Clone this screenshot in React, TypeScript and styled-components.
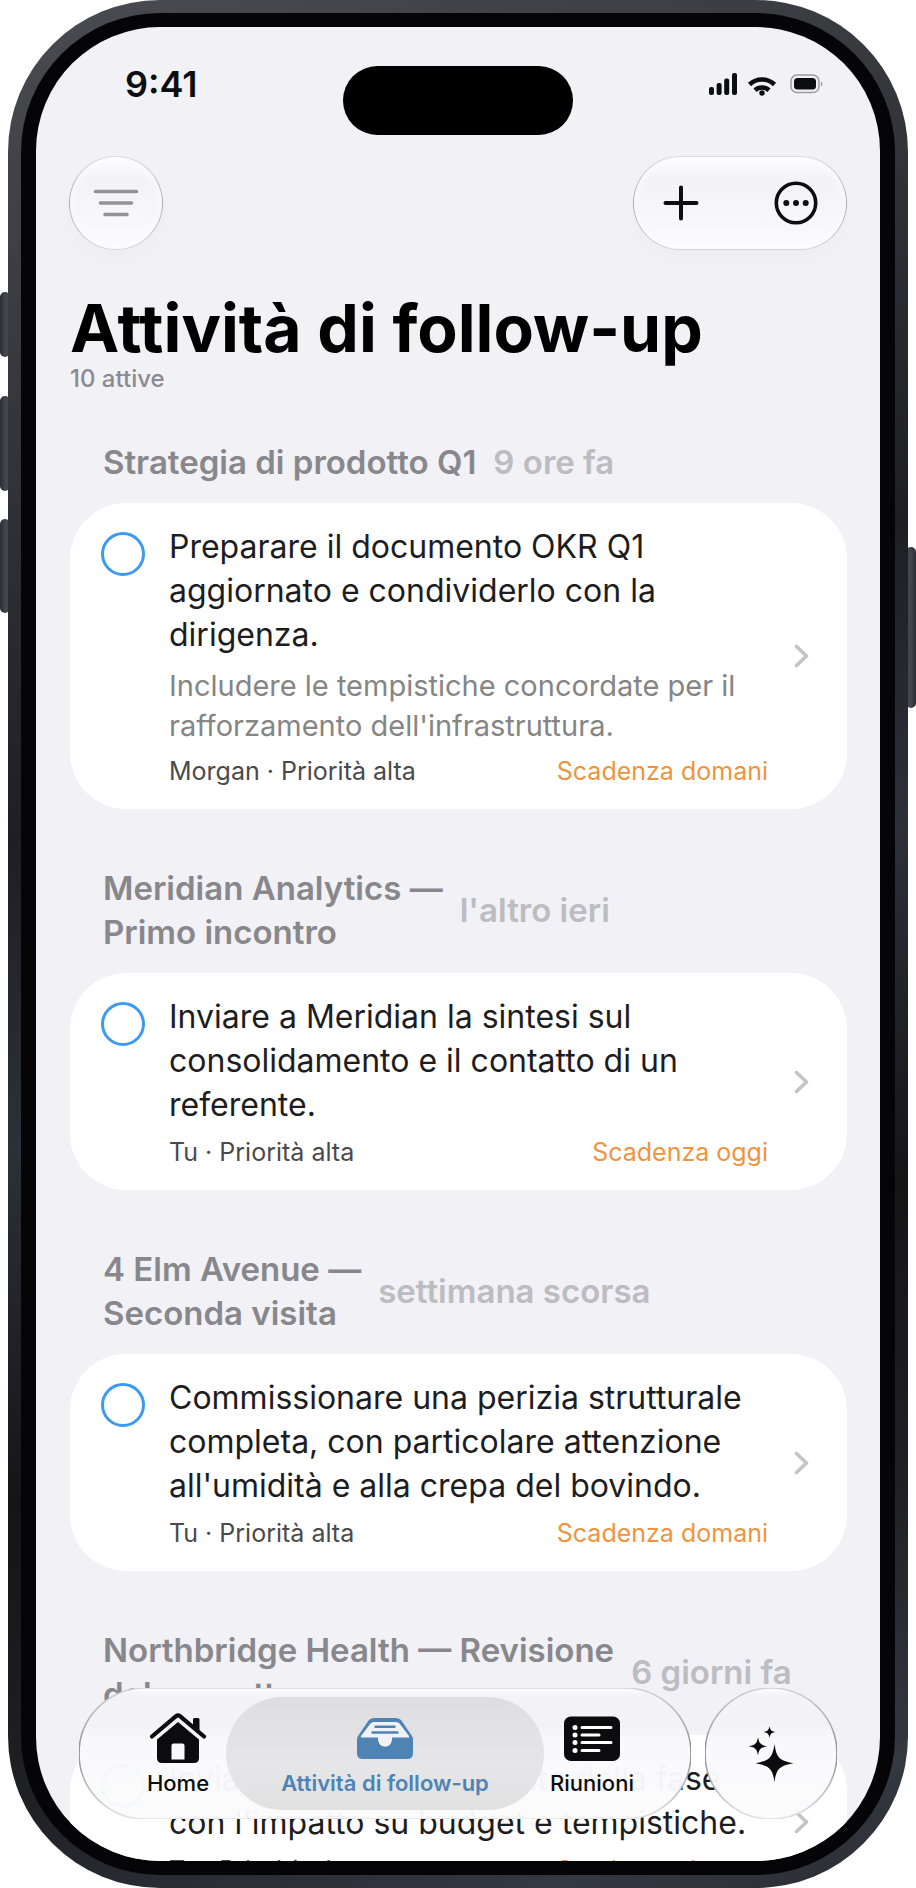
import React from 'react';
import styled, { createGlobalStyle } from 'styled-components';

const GlobalStyle = createGlobalStyle`
  *, *::before, *::after { box-sizing: border-box; }
  body { margin: 0; background: #fff; font-family: Inter, "Liberation Sans", sans-serif; }
  button, input { font: inherit; }
`;

const Device = styled.div`
  position: relative;
  height: 100vh;
  min-height: 900px;
  padding: 0 8px;
`;

const SideKey = styled.span<{ $top: number; $length: number; $side: 'left' | 'right' }>`
  position: absolute;
  top: ${(p) => p.$top}px;
  ${(p) => p.$side}: 0;
  width: 10px;
  height: ${(p) => p.$length}px;
  border-radius: 5px;
  background: linear-gradient(to ${(p) => p.$side}, #3c3e43, #46484e 40%, #2b2d32);
`;

const Frame = styled.div`
  position: relative;
  height: 100%;
  padding: 13px;
  border-radius: 152px;
  background: linear-gradient(160deg, #4a4c51 0%, #3a3c42 14%, #2d3035 24%, #1d1f23 38%, #2c3038 52%, #141517 68%, #1f2125 82%, #343841 94%, #2a2c30 100%);
`;

const Bezel = styled.div`
  height: 100%;
  padding: 14px 15px;
  border-radius: 139px;
  background: #050507;
`;

const Screen = styled.div`
  position: relative;
  display: flex;
  flex-direction: column;
  height: 100%;
  overflow: hidden;
  border-radius: 124px;
  background: #f1f1f6;
`;

const StatusBar = styled.div`
  display: grid;
  grid-template-columns: 1fr 230px 1fr;
  flex: none;
  height: 108px;
  padding: 39px 57px 0;
`;

const Clock = styled.time`
  padding-left: 32px;
  font-size: 36px;
  line-height: 36px;
  font-weight: 600;
  color: #0c0d10;
`;

const Island = styled.div`
  height: 69px;
  border-radius: 35px;
  background: #000;
`;

const StatusIcons = styled.div`
  display: flex;
  justify-content: flex-end;
  align-items: center;
  height: 36px;
`;

const Toolbar = styled.div`
  display: flex;
  justify-content: space-between;
  flex: none;
  padding: 21px 33px 0;
`;

const glass = `
  border: 1px solid transparent;
  background:
    linear-gradient(to bottom, #fcfcff 0%, #f3f3f7 24%, #f5f5fa 55%, #fbfbfe 100%) padding-box,
    linear-gradient(to bottom, #dcdce0, #ababaf 50%, #d6d6da) border-box;
  box-shadow: 0 10px 24px rgba(0, 0, 0, 0.02), inset 0 0 14px rgba(255, 255, 255, 0.8);
`;

const RoundButton = styled.button`
  display: grid;
  place-items: center;
  width: 94px;
  height: 94px;
  padding: 0;
  border-radius: 50%;
  ${glass}
`;

const ButtonGroup = styled.div`
  display: flex;
  justify-content: space-between;
  width: 214px;
  height: 94px;
  padding: 0 3px 0 0;
  border-radius: 47px;
  ${glass}
`;

const GroupButton = styled.button`
  display: grid;
  place-items: center;
  width: 94px;
  height: 92px;
  padding: 0;
  border: 0;
  background: none;
`;

const Header = styled.header`
  flex: none;
  padding: 42px 33px 0 34px;
`;

const Title = styled.h1`
  margin: 0;
  font-size: 66px;
  line-height: 72px;
  font-weight: 700;
  color: #000;
`;

const Subtitle = styled.p`
  margin: 0;
  font-size: 24px;
  line-height: 30px;
  font-weight: 500;
  color: #8a8a8f;
`;

const List = styled.main`
  flex: 1;
  min-height: 0;
  overflow: hidden;
  padding: 46px 33px 0 34px;
`;

const Section = styled.section`
  margin-bottom: 57px;
`;

const SectionHeader = styled.div`
  display: flex;
  align-items: center;
  gap: 17px;
  margin-bottom: 19px;
  padding: 0 33px;
  font-size: 33px;
  line-height: 44px;
  font-weight: 600;
`;

const SectionTitle = styled.h2`
  margin: 0;
  font: inherit;
  white-space: pre;
  color: #87878c;
`;

const SectionAge = styled.span`
  white-space: nowrap;
  color: #bcbcc1;
`;

const Card = styled.article`
  display: flex;
  align-items: center;
  padding: 22px 38px 22px 31px;
  border-radius: 56px;
  background: #fff;
`;

const Check = styled.input`
  appearance: none;
  flex: none;
  align-self: flex-start;
  width: 44px;
  height: 44px;
  margin: 7px 24px 0 0;
  border: 3px solid #3c9bf0;
  border-radius: 50%;
`;

const CardBody = styled.div`
  flex: 1;
  min-width: 0;
`;

const TaskTitle = styled.label`
  display: block;
  font-size: 32px;
  line-height: 44px;
  white-space: pre-line;
  color: #1d1d1f;
`;

const TaskNote = styled.p`
  margin: 9px 0 0;
  font-size: 29px;
  line-height: 40px;
  white-space: pre-line;
  color: #858585;
`;

const TaskMeta = styled.div`
  display: flex;
  justify-content: space-between;
  margin-top: 9px;
  font-size: 25px;
  line-height: 32px;
  color: #4a4a4a;
`;

const Due = styled.span`
  color: #ee9440;
`;

const Chevron = styled.svg`
  flex: none;
  margin-left: 26px;
`;

const Dock = styled.div`
  position: absolute;
  right: 43px;
  bottom: 42px;
  left: 43px;
  display: flex;
  gap: 14px;
  height: 131px;
`;

const dockGlass = `
  border: 0;
  background:
    linear-gradient(to bottom, #fff 0%, #f4f4f8 5%, #f3f3f7 28%, rgba(249, 249, 251, 0.98) 40%, rgba(251, 251, 252, 0.96) 100%);
`;

const Rim = styled.svg`
  position: absolute;
  inset: 0;
  width: 100%;
  height: 100%;
  pointer-events: none;
`;

const TabBar = styled.nav`
  position: relative;
  display: flex;
  flex: 1;
  padding: 9px;
  border-radius: 66px;
  ${dockGlass}
`;

const Tab = styled.button<{ $active?: boolean; $outer?: 'left' | 'right' }>`
  display: flex;
  flex-direction: column;
  align-items: center;
  gap: 5px;
  flex: ${(p) => (p.$active ? '0 0 318px' : '1 1 0')};
  padding: 15px 0 0;
  ${(p) => p.$outer && `padding-${p.$outer}: 42px;`}
  border: 0;
  border-radius: 57px;
  background: ${(p) => (p.$active ? 'linear-gradient(to bottom, #dedee2, #e6e6e8 60%, #e1e1e2)' : 'none')};
  font-size: 22px;
  line-height: 28px;
  font-weight: ${(p) => (p.$active ? 600 : 500)};
  color: ${(p) => (p.$active ? '#4f83b4' : '#0c0c0e')};
`;

const AssistantButton = styled.button`
  position: relative;
  display: grid;
  place-items: center;
  width: 132px;
  padding: 0;
  border-radius: 50%;
  ${dockGlass}
`;

const FilterIcon = () => (
  <svg width="46" height="28" viewBox="0 0 46 28" stroke="#929297" strokeWidth="3.6" strokeLinecap="round">
    <path d="M2.5 2.5h41M7.5 14h31M12 25.5h22" />
  </svg>
);

const PlusIcon = () => (
  <svg width="36" height="36" viewBox="0 0 36 36" stroke="#0e0e10" strokeWidth="4" strokeLinecap="round">
    <path d="M18 2.5v31M2.5 18h31" />
  </svg>
);

const MoreIcon = () => (
  <svg width="44" height="44" viewBox="0 0 44 44" fill="#0e0e10">
    <circle cx="22" cy="22" r="19.7" fill="none" stroke="#0e0e10" strokeWidth="3.6" />
    <circle cx="12.3" cy="22" r="3" />
    <circle cx="22" cy="22" r="3" />
    <circle cx="31.7" cy="22" r="3" />
  </svg>
);

const StatusGlyphs = () => (
  <svg width="114" height="24" viewBox="0 0 114 24" fill="#0c0d10">
    <rect x="0" y="15" width="5" height="8" rx="2" />
    <rect x="7.6" y="11" width="5" height="12" rx="2" />
    <rect x="15.2" y="6.5" width="5" height="16.5" rx="2" />
    <rect x="23" y="1" width="5" height="22" rx="2" />
    <g fill="none" stroke="#0c0d10" strokeWidth="4.6">
      <path d="M40.5 12.5a18 18 0 0 1 25 0" />
      <path d="M46 18.2a10.5 10.5 0 0 1 14 0" />
    </g>
    <circle cx="53" cy="21" r="2.7" />
    <rect x="82" y="3" width="28" height="17.5" rx="6" fill="none" stroke="#9c9ca1" strokeWidth="1.5" />
    <rect x="85" y="6" width="22" height="11.5" rx="3.5" />
    <path d="M112 9.5c1.8.6 1.8 4.4 0 5z" fill="#9c9ca1" />
  </svg>
);

const HomeIcon = () => (
  <svg width="58" height="52" viewBox="0 0 58 52" fill="#0c0c0e">
    <path d="M44 7.5q0-1.5 1.5-1.5h3.5q1.5 0 1.5 1.5v11l-6.5-5.5z" />
    <path d="M3 24.5 27 4.2q2-1.6 4 0L55 24.5" fill="none" stroke="#0c0c0e" strokeWidth="4.2" strokeLinecap="round" />
    <path fillRule="evenodd" d="M29 10 50 27.5V46q0 5-5 5H13q-5 0-5-5V27.5zM24.5 31.5q-2 0-2 2v14h13v-14q0-2-2-2z" />
  </svg>
);

const TrayIcon = () => (
  <svg width="58" height="52" viewBox="0 0 58 52">
    <path d="M3 26 13.5 10.5Q15.5 8 18.5 8h21q3 0 5 2.5L55 26" fill="none" stroke="#4f83b4" strokeWidth="4" strokeLinejoin="round" />
    <path d="M5 24 14.5 11.5Q16 10 18.5 10h21q2.5 0 4 1.5L53 24v2H5z" fill="#f1f2f5" />
    <path d="M1 25.5h21q0 9 7 9t7-9h21V41q0 6-6 6H7q-6 0-6-6z" fill="#4f83b4" />
    <path d="M22 25.5q0 9 7 9t7-9z" fill="#f1f2f5" />
    <path d="M19.5 14.7h19M16.5 20.5h25" stroke="#4f83b4" strokeWidth="2.4" strokeLinecap="round" />
  </svg>
);

const ListIcon = () => (
  <svg width="58" height="52" viewBox="0 0 58 52">
    <rect x="1" y="4.5" width="56" height="44.5" rx="7" fill="#0c0c0e" />
    <g stroke="#fff" strokeWidth="3" strokeLinecap="round">
      <path d="M19 15.5h29M19 23h17M19 30.5h29M19 38.5h17" />
    </g>
    <g fill="#fff">
      <circle cx="12" cy="15.5" r="2.5" />
      <circle cx="12" cy="23" r="2.5" />
      <circle cx="12" cy="30.5" r="2.5" />
      <circle cx="12" cy="38.5" r="2.5" />
    </g>
  </svg>
);

const SparkleIcon = () => (
  <svg width="46" height="56" viewBox="0 0 46 56" fill="#0c0c0e">
    <path d="M26.5 18c2 13.5 4.5 16.5 19 19.2-14.5 2.7-17 5.5-19 18.8-2-13.3-4.5-16.1-19-18.8 14.5-2.7 17-5.7 19-19.2z" />
    <path d="M10 11c1.100 6.500 2.500 8 9.500 9.300C12.500 21.600 11.100 23 10 29.500 8.900 23 7.500 21.600.5 20.300 7.500 19 8.900 17.500 10 11z" />
    <path d="M21.5 0c.8 4.3 1.7 5.3 6.2 6-4.5.8-5.4 1.7-6.2 6-.8-4.3-1.7-5.2-6.2-6 4.5-.7 5.4-1.7 6.2-6z" />
  </svg>
);

const GlassRim = ({ id }: { id: string }) => (
  <Rim aria-hidden="true">
    <defs>
      <linearGradient id={id} x1="0" y1="0" x2="0" y2="1">
        <stop offset="0" stopColor="#d2d2d6" />
        <stop offset="0.5" stopColor="#8f8f92" />
        <stop offset="1" stopColor="#e2e2e4" />
      </linearGradient>
    </defs>
    <rect x="0" y="0" width="100%" height="100%" rx="66" fill="none" stroke={`url(#${id})`} strokeWidth="1.6" />
  </Rim>
);

interface Task {
  id: string;
  meeting: string;
  age: string;
  title: string;
  note?: string;
  owner: string;
  due: string;
}

const tasks: Task[] = [
  {
    id: 'okr',
    meeting: 'Strategia di prodotto Q1',
    age: '9 ore fa',
    title: 'Preparare il documento OKR Q1\naggiornato e condividerlo con la\ndirigenza.',
    note: "Includere le tempistiche concordate per il\nrafforzamento dell'infrastruttura.",
    owner: 'Morgan',
    due: 'Scadenza domani',
  },
  {
    id: 'meridian',
    meeting: 'Meridian Analytics —\nPrimo incontro',
    age: "l'altro ieri",
    title: 'Inviare a Meridian la sintesi sul\nconsolidamento e il contatto di un\nreferente.',
    owner: 'Tu',
    due: 'Scadenza oggi',
  },
  {
    id: 'elm',
    meeting: '4 Elm Avenue —\nSeconda visita',
    age: 'settimana scorsa',
    title: "Commissionare una perizia strutturale\ncompleta, con particolare attenzione\nall'umidità e alla crepa del bovindo.",
    owner: 'Tu',
    due: 'Scadenza domani',
  },
  {
    id: 'northbridge',
    meeting: 'Northbridge Health — Revisione\ndel progetto',
    age: '6 giorni fa',
    title: "Inviare la stima aggiornata della fase\ncon l'impatto su budget e tempistiche.",
    owner: 'Tu',
    due: 'Scadenza domani',
  },
];

const TaskSection = ({ task }: { task: Task }) => (
  <Section>
    <SectionHeader>
      <SectionTitle>{task.meeting}</SectionTitle>
      <SectionAge>{task.age}</SectionAge>
    </SectionHeader>
    <Card>
      <Check type="checkbox" id={task.id} />
      <CardBody>
        <TaskTitle htmlFor={task.id}>{task.title}</TaskTitle>
        {task.note && <TaskNote>{task.note}</TaskNote>}
        <TaskMeta>
          <span>{task.owner} · Priorità alta</span>
          <Due>{task.due}</Due>
        </TaskMeta>
      </CardBody>
      <Chevron width="15" height="24" viewBox="0 0 15 24" fill="none" stroke="#c4c4c6" strokeWidth="3.6" strokeLinecap="round" strokeLinejoin="round">
        <path d="M2.5 2.5 12.5 12l-10 9.5" />
      </Chevron>
    </Card>
  </Section>
);

export default function App() {
  return (
    <>
      <GlobalStyle />
      <Device>
        <SideKey $side="left" $top={292} $length={65} />
        <SideKey $side="left" $top={396} $length={95} />
        <SideKey $side="left" $top={519} $length={94} />
        <SideKey $side="right" $top={547} $length={161} />
        <Frame>
          <Bezel>
            <Screen>
              <StatusBar>
                <Clock>9:41</Clock>
                <Island />
                <StatusIcons>
                  <StatusGlyphs />
                </StatusIcons>
              </StatusBar>
              <Toolbar>
                <RoundButton aria-label="Filtra">
                  <FilterIcon />
                </RoundButton>
                <ButtonGroup>
                  <GroupButton aria-label="Aggiungi">
                    <PlusIcon />
                  </GroupButton>
                  <GroupButton aria-label="Altro">
                    <MoreIcon />
                  </GroupButton>
                </ButtonGroup>
              </Toolbar>
              <Header>
                <Title>Attività di follow-up</Title>
                <Subtitle>10 attive</Subtitle>
              </Header>
              <List>
                {tasks.map((task) => (
                  <TaskSection key={task.id} task={task} />
                ))}
              </List>
              <Dock>
                <TabBar>
                  <GlassRim id="rim-tabs" />
                  <Tab $outer="left">
                    <HomeIcon />
                    Home
                  </Tab>
                  <Tab $active>
                    <TrayIcon />
                    Attività di follow-up
                  </Tab>
                  <Tab $outer="right">
                    <ListIcon />
                    Riunioni
                  </Tab>
                </TabBar>
                <AssistantButton aria-label="Assistente">
                  <GlassRim id="rim-assistant" />
                  <SparkleIcon />
                </AssistantButton>
              </Dock>
            </Screen>
          </Bezel>
        </Frame>
      </Device>
    </>
  );
}
